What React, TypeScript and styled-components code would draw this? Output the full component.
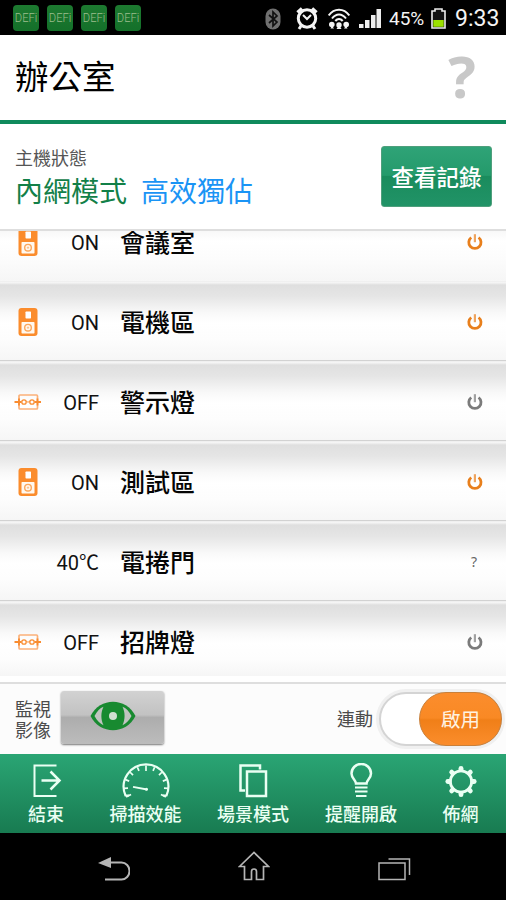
import React from 'react';
import styled, { createGlobalStyle } from 'styled-components';

const GlobalStyle = createGlobalStyle`
  * { box-sizing: border-box; }
  body {
    margin: 0;
    background: #000;
    font-family: Roboto, "Noto Sans CJK TC", sans-serif;
    -webkit-font-smoothing: antialiased;
  }
  svg { display: block; flex: none; }
`;

const Screen = styled.div`
  width: 506px;
  height: 900px;
  display: flex;
  flex-direction: column;
  overflow: hidden;
  background: #fff;
`;

const StatusBar = styled.header`
  height: 35px;
  flex: none;
  display: flex;
  align-items: center;
  justify-content: space-between;
  padding: 0 8px 0 13px;
  background: #000;
  color: #f4f4f4;
`;

const AppBadges = styled.div`
  display: flex;
  gap: 8px;
`;

const AppBadge = styled.span`
  width: 26px;
  height: 26px;
  border-radius: 4px;
  background: linear-gradient(#1d7a30, #14702a);
  color: #9cbd8c;
  font: 300 13px/26px Roboto, sans-serif;
  display: flex;
  justify-content: center;
  white-space: nowrap;
  span { transform: scaleX(0.86); }
`;

const SystemIcons = styled.div`
  display: flex;
  align-items: center;
  margin-top: 2px;
`;

const StatusIcon = styled.svg<{ $gap: number }>`
  margin-left: ${p => p.$gap}px;
`;

const BatteryText = styled.span`
  font-size: 19px;
  line-height: 22px;
  width: 37px;
  margin: 1px 0 0 8px;
  white-space: nowrap;
`;

const Clock = styled.span`
  font-size: 23px;
  line-height: 26px;
  margin-left: 9px;
  width: 43px;
  white-space: nowrap;
`;

const TitleBar = styled.div`
  height: 89px;
  flex: none;
  display: flex;
  justify-content: space-between;
  align-items: center;
  padding: 0 30px 0 15px;
  border-bottom: 4px solid #0f8a5c;
`;

const Title = styled.h1`
  margin: 0;
  font-size: 33.5px;
  line-height: 40px;
  font-weight: 400;
  color: #000;
`;

const HelpMark = styled.span`
  margin-top: -4px;
  font: 700 58px/60px "Open Sans", sans-serif;
  color: #c8c8c8;
`;

const HostPanel = styled.section`
  height: 107px;
  flex: none;
  display: flex;
  justify-content: space-between;
  padding: 22px 14px 0 15px;
  border-bottom: 2px solid #dedede;
`;

const HostLabel = styled.div`
  margin-top: 1px;
  font-size: 18px;
  line-height: 24px;
  color: #555;
`;

const HostModes = styled.div`
  display: flex;
  gap: 14px;
  font-size: 28px;
  line-height: 38px;
  margin-top: 3px;
`;

const Mode = styled.span<{ $color: string }>`
  color: ${p => p.$color};
`;

const LogButton = styled.button`
  width: 111px;
  height: 61px;
  padding: 3px 0 0;
  border: 1px solid #4f9f7c;
  border-radius: 3px;
  background: linear-gradient(#2fa377 0%, #249a6b 48%, #1a8c5d 50%, #219367 100%);
  color: #fff;
  font: 500 22.5px/30px Roboto, "Noto Sans CJK TC", sans-serif;
  white-space: nowrap;
`;

const DeviceList = styled.ul`
  list-style: none;
  margin: 0;
  padding: 0;
  height: 445px;
  flex: none;
  display: flex;
  flex-direction: column;
  overflow: hidden;
`;

const DeviceRow = styled.li<{ $cut?: 'top' | 'bottom' }>`
  height: ${p => (p.$cut === 'top' ? 50 : p.$cut === 'bottom' ? 75 : 80)}px;
  flex: none;
  display: grid;
  grid-template-columns: 55px 44px 1fr 63px;
  align-items: start;
  padding-top: ${p => (p.$cut === 'top' ? 0 : 30)}px;
  background: ${p =>
    p.$cut === 'top'
      ? 'linear-gradient(#f8f8f8 0, #fff 10px, #fcfcfc 28px, #f6f6f6 100%)'
      : 'linear-gradient(#e9e9e9 0, #f7f7f7 1px, #f2f2f2 2px, #dfdfdf 4px, #e5e5e5 15px, #f9f9f9 32px, #fff 42px, #fdfdfd 58px, #f6f6f6 100%)'};
  border-bottom: ${p => (p.$cut ? 0 : 1)}px solid #d2d2d2;
`;

const DeviceIcon = styled.div`
  height: 26px;
  padding-left: 14px;
  display: flex;
  align-items: center;
  margin-top: -2px;
`;

const DeviceState = styled.span`
  justify-self: end;
  margin-top: -1px;
  font-size: 20px;
  line-height: 26px;
  color: #111;
  white-space: nowrap;
`;

const DeviceName = styled.span`
  padding-left: 21px;
  font-size: 25px;
  line-height: 26px;
  font-weight: 500;
  color: #050505;
`;

const DevicePower = styled.div`
  height: 26px;
  margin-top: -2px;
  padding-left: 24px;
  display: flex;
  align-items: center;
`;

const UnknownMark = styled.span`
  font: 400 14px/16px "Noto Sans", sans-serif;
  color: #666;
  padding-left: 4px;
`;

const ControlBar = styled.section`
  height: 78px;
  flex: none;
  display: flex;
  align-items: center;
  padding: 0 4px 0 15px;
  background: linear-gradient(#fff 0 6px, #dedede 6px 8px, #fcfcfc 8px);
`;

const ControlLabel = styled.span`
  font-size: 18px;
  line-height: 21px;
  color: #4c4c4c;
  width: 36px;
  padding-top: 9px;
  white-space: nowrap;
`;

const CameraButton = styled.button`
  margin: 5px 0 0 10px;
  width: 103px;
  height: 53px;
  border: 0;
  padding: 0 0 3px;
  border-radius: 3px;
  background: linear-gradient(#d2d2d2 0, #c2c2c2 45%, #adadad 50%, #bcbcbc 100%);
  box-shadow: 0 1px 2px #777;
  display: flex;
  align-items: center;
  justify-content: center;
`;

const Toggle = styled.div`
  margin: 8px 0 0 6px;
  width: 123px;
  height: 54px;
  border-radius: 27px;
  border: 2px solid #d4d4d4;
  box-shadow: 0 0 0 3px #f0f0f0;
  background: #fff;
  display: flex;
  justify-content: flex-end;
`;

const ToggleKnob = styled.span`
  width: 83px;
  height: 54px;
  margin: -2px -2px 0 0;
  border-radius: 27px;
  border: 1px solid #c9803a;
  background: linear-gradient(#fb8d2d 0, #f98924 48%, #f07f18 52%, #fb8d2c 100%);
  color: #fff3e2;
  font-size: 19.5px;
  line-height: 55px;
  text-align: center;
`;

const Spacer = styled.div`
  flex: 1;
`;

const TabBar = styled.nav`
  height: 79px;
  flex: none;
  display: grid;
  grid-template-columns: 92px 107px 108px 108px 1fr;
  background: linear-gradient(#2aa574, #187b51);
`;

const Tab = styled.div`
  display: flex;
  flex-direction: column;
  align-items: center;
  padding-top: 9px;
  color: #eafff3;
  font-size: 18px;
  line-height: 24px;
  font-weight: 500;
  white-space: nowrap;
  svg { margin-bottom: 4px; }
`;

const SystemNav = styled.footer`
  height: 67px;
  flex: none;
  display: flex;
  justify-content: center;
  gap: 108px;
  padding: 18px 0 0 2px;
  background: #000;
`;

const Bluetooth = () => (
  <svg width="16" height="22" viewBox="0 0 16 22">
    <rect x="0.5" y="0.5" width="15" height="21" rx="7.5" fill="#707070" />
    <path d="M4 7l8 7-4 4V4l4 4-8 7" fill="none" stroke="#111" strokeWidth="1.7" />
  </svg>
);

const Alarm = () => (
  <StatusIcon $gap={15} width="22" height="23" viewBox="0 0 22 23" fill="none" stroke="#f4f4f4">
    <circle cx="11" cy="11.5" r="8.7" strokeWidth="3" />
    <path d="M1.5 5.5L6 1.5M20.5 5.5L16 1.500" strokeWidth="3.5" />
    <path d="M5 19l-2 3M17 19l2 3" strokeWidth="3" />
    <path d="M7 8l4 4 4-4" strokeWidth="2" />
  </StatusIcon>
);

const Hotspot = () => (
  <StatusIcon $gap={10} width="22" height="22" viewBox="0 0 22 22" fill="none" stroke="#f4f4f4" strokeWidth="2">
    <path d="M0.7 7.5C6-.2 16-.2 21.3 7.5M4 10.5C8 5 14 5 18 10.5M7.3 13C9.5 10.3 12.5 10.3 14.7 13" />
    <g fill="#f4f4f4" stroke="none">
      <circle cx="11" cy="17" r="2.7" />
      <circle cx="3.8" cy="16.5" r="2.8" />
      <circle cx="18.2" cy="16.5" r="2.8" />
      <path d="M8.500 21l2.500-4 2.500 4zM2.500 20.500l1.300-3 2.200 3zM16 20.500l2-3 1.500 3z" />
    </g>
  </StatusIcon>
);

const Signal = () => (
  <StatusIcon $gap={9} width="22" height="21" viewBox="0 0 22 21" fill="#ededed">
    <path d="M0 16h4.5v4H0zM6 12h4.5v8H6zM12 7h4.5v13H12zM17.5 1H22v19h-4.5z" />
  </StatusIcon>
);

const Battery = () => (
  <StatusIcon $gap={5} width="15" height="21" viewBox="0 0 15 21">
    <path d="M1 3h3V1h7v2h3v17H1z" fill="#111" stroke="#ededed" strokeWidth="1.6" />
    <rect x="2.3" y="12" width="10.400" height="6.800" fill="#9be000" />
  </StatusIcon>
);

const Speaker = () => (
  <svg width="28" height="28" viewBox="0 0 28 28">
    <rect x="4.5" y="0" width="19" height="28" rx="3" fill="#fb8c2c" />
    <rect x="11.5" y="3.5" width="5.5" height="7" rx="0.7" fill="#fff" />
    <rect x="7.5" y="14" width="13" height="11.5" rx="0.7" fill="#fff8ef" />
    <circle cx="14" cy="19.7" r="3.3" fill="none" stroke="#fba65b" strokeWidth="1.4" />
    <path d="M14 18.5v2.4M12.8 19.7h2.4" stroke="#fbb374" strokeWidth="0.8" />
  </svg>
);

const Relay = () => (
  <svg width="28" height="18" viewBox="0 0 28 18" fill="none" stroke="#f98c30">
    <rect x="5" y="2" width="18.5" height="14" rx="1" stroke="#fbb179" strokeWidth="1.7" />
    <path d="M0.500 9h7M20.500 9H27" strokeWidth="2" />
    <path d="M5 5.500v7M23.500 5.500v7" strokeWidth="1.800" />
    <circle cx="10" cy="9" r="2.2" strokeWidth="1.3" />
    <circle cx="18" cy="9" r="2.2" strokeWidth="1.3" />
    <path d="M12.5 8l1.5 1.500L15.500 8" strokeWidth="1" />
  </svg>
);

const Power = ({ on }: { on: boolean }) => (
  <svg width="16" height="18" viewBox="0 0 16 18" fill="none" stroke={on ? '#e87f1c' : '#7b7b7b'}>
    <path d="M4.200 4.500a6.100 6.100 0 1 0 7.400 0" strokeWidth="2.800" />
    <path d="M7.900 1.200v8" strokeWidth="2.200" opacity="0.700" />
  </svg>
);

const Eye = () => (
  <svg width="46" height="30" viewBox="0 0 46 30">
    <path d="M0.500 15C10-4 36-4 45.500 15 36 34 10 34 0.500 15z" fill="#188a30" />
    <path
      d="M4.500 15C7 10.200 10 7.200 13.500 5.800 10.700 11.500 10.700 18.500 13.500 24.200 10 22.800 7 19.800 4.500 15zM41.500 15C39 10.200 36 7.200 32.500 5.800 35.300 11.500 35.300 18.500 32.500 24.200 36 22.800 39 19.800 41.500 15z"
      fill="#c0c4c0"
    />
    <circle cx="23" cy="15" r="4" fill="#d0dfd0" />
  </svg>
);

const TabIcon = ({ children }: { children: React.ReactNode }) => (
  <svg width="48" height="36" viewBox="0 0 48 36" fill="none" stroke="#eafff3" strokeWidth="2">
    {children}
  </svg>
);

const ExitIcon = () => (
  <TabIcon>
    <path d="M34.500 2.500H12.500V33h22" />
    <path d="M19.500 17.500h18M28.500 8.500l9 9-9 9" strokeWidth="2.500" />
  </TabIcon>
);

const GaugeIcon = () => {
  const ticks = Array.from({ length: 11 }, (_, i) => Math.PI * (1.14 - (i * 1.28) / 10));
  return (
    <TabIcon>
      <path d="M7 32.500H3.500A22.300 22.300 0 1 1 44.500 32.500H41" strokeWidth="2.200" />
      <path
        d={ticks
          .map((a, i) => {
            const inner = i % 5 === 0 ? 16.5 : 18;
            const x = Math.cos(a);
            const y = Math.sin(a);
            return `M${24 + 22 * x} ${24.5 - 22 * y}L${24 + inner * x} ${24.5 - inner * y}`;
          })
          .join('')}
        strokeWidth="1.700"
      />
      <path d="M11 23.800L25 26.500" strokeWidth="1.800" />
      <circle cx="24.500" cy="26.300" r="1.500" fill="#eafff3" stroke="none" />
    </TabIcon>
  );
};

const PagesIcon = () => (
  <TabIcon>
    <path d="M18 8.500h19V33H18zM16 27.500h-4.500V2.500H31v4" strokeWidth="2.500" />
  </TabIcon>
);

const BulbIcon = () => (
  <TabIcon>
    <path d="M19 20.500c0-3.500-4.500-5-4.500-10a9.700 9.500 0 0 1 19.500 0c0 5-4.500 6.500-4.500 10z" strokeWidth="2.500" />
    <path d="M18 24.500h12.500M18 28.500h12.500M19 33h10.500" />
  </TabIcon>
);

const GearIcon = () => (
  <TabIcon>
    <circle cx="24" cy="18.500" r="10.700" strokeWidth="2.800" />
    <g strokeWidth="4.800" strokeLinecap="round">
      {[0, 45, 90, 135, 180, 225, 270, 315].map(a => (
        <path key={a} d="M24 6.800v-1.500" transform={`rotate(${a} 24 18.5)`} />
      ))}
    </g>
  </TabIcon>
);

const tabs = [
  { label: '結束', Icon: ExitIcon },
  { label: '掃描效能', Icon: GaugeIcon },
  { label: '場景模式', Icon: PagesIcon },
  { label: '提醒開啟', Icon: BulbIcon },
  { label: '佈網', Icon: GearIcon },
];

type Device = {
  icon?: 'speaker' | 'relay';
  state: string;
  name: string;
  power: 'on' | 'off' | 'unknown';
  cut?: 'top' | 'bottom';
};

const devices: Device[] = [
  { icon: 'speaker', state: 'ON', name: '會議室', power: 'on', cut: 'top' },
  { icon: 'speaker', state: 'ON', name: '電機區', power: 'on' },
  { icon: 'relay', state: 'OFF', name: '警示燈', power: 'off' },
  { icon: 'speaker', state: 'ON', name: '測試區', power: 'on' },
  { state: '40℃', name: '電捲門', power: 'unknown' },
  { icon: 'relay', state: 'OFF', name: '招牌燈', power: 'off', cut: 'bottom' },
];

export default function App() {
  return (
    <>
      <GlobalStyle />
      <Screen>
        <StatusBar>
          <AppBadges>
            {[0, 1, 2, 3].map(i => (
              <AppBadge key={i}><span>DEFi</span></AppBadge>
            ))}
          </AppBadges>
          <SystemIcons>
            <Bluetooth />
            <Alarm />
            <Hotspot />
            <Signal />
            <BatteryText>45%</BatteryText>
            <Battery />
            <Clock>9:33</Clock>
          </SystemIcons>
        </StatusBar>
        <TitleBar>
          <Title>辦公室</Title>
          <HelpMark>?</HelpMark>
        </TitleBar>
        <HostPanel>
          <div>
            <HostLabel>主機狀態</HostLabel>
            <HostModes>
              <Mode $color="#128048">內網模式</Mode>
              <Mode $color="#1a94f5">高效獨佔</Mode>
            </HostModes>
          </div>
          <LogButton>查看記錄</LogButton>
        </HostPanel>
        <DeviceList>
          {devices.map(d => (
            <DeviceRow key={d.name} $cut={d.cut}>
              <DeviceIcon>
                {d.icon === 'speaker' && <Speaker />}
                {d.icon === 'relay' && <Relay />}
              </DeviceIcon>
              <DeviceState>{d.state}</DeviceState>
              <DeviceName>{d.name}</DeviceName>
              <DevicePower>
                {d.power === 'unknown' ? <UnknownMark>?</UnknownMark> : <Power on={d.power === 'on'} />}
              </DevicePower>
            </DeviceRow>
          ))}
        </DeviceList>
        <ControlBar>
          <ControlLabel>監視<br />影像</ControlLabel>
          <CameraButton><Eye /></CameraButton>
          <Spacer />
          <ControlLabel>連動</ControlLabel>
          <Toggle><ToggleKnob>啟用</ToggleKnob></Toggle>
        </ControlBar>
        <TabBar>
          {tabs.map(({ label, Icon }) => (
            <Tab key={label}>
              <Icon />
              {label}
            </Tab>
          ))}
        </TabBar>
        <SystemNav>
          <svg width="32" height="30" viewBox="0 0 32 30" fill="none" stroke="#b5b5b5" strokeWidth="2">
            <path d="M10 11.500h13.500a7.700 8.200 0 0 1 0 17H7" />
            <path d="M0 12l13-6v11z" fill="#b5b5b5" stroke="none" />
          </svg>
          <svg width="32" height="30" viewBox="0 0 32 30" fill="none" stroke="#b5b5b5" strokeWidth="1.700">
            <path d="M1.500 15.500L16 1.500l14.500 14H25.500v13h-7v-8a2.500 2.500 0 0 0-5 0v8h-7v-13z" />
          </svg>
          <svg width="33" height="30" viewBox="0 0 33 30" fill="none" stroke="#b5b5b5" strokeWidth="1.500">
            <path d="M1 12h26v16.500H1zM10.500 8H31.500v16" />
          </svg>
        </SystemNav>
      </Screen>
    </>
  );
}
